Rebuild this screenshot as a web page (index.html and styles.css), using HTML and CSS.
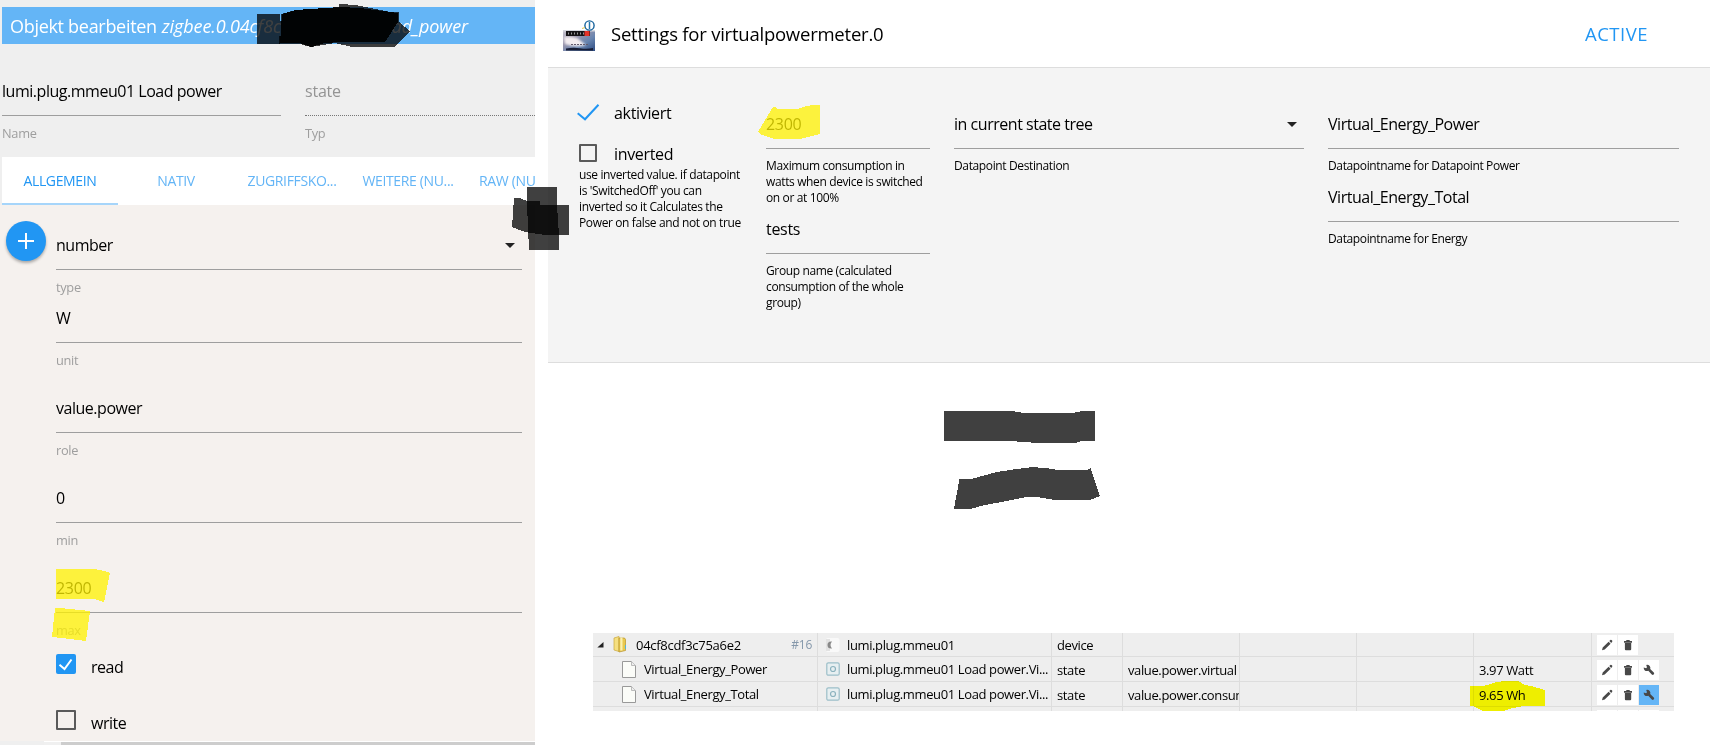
FILE: index.html
```html
<!DOCTYPE html>
<html lang="de">
<head>
<meta charset="utf-8">
<title>virtualpowermeter</title>
<link rel="stylesheet" href="styles.css">
</head>
<body>
<svg class="defs" width="0" height="0">
  <defs>
    <symbol id="pencil" viewBox="0 0 20 20"><path d="M5 15.200l.7-2.600 5.900-5.900 2 2-5.900 5.900zM12.300 6l1.100-1.100q.6-.4 1.100.1l.6.600q.5.5.1 1.100l-1 1.200z" fill="#484848"/></symbol>
    <symbol id="trash" viewBox="0 0 20 20"><path d="M6 6h2.300V5h3.400v1H14v1.700H6zM6.900 8h6.300v6.200q0 1-1 1H7.900q-1 0-1-1z" fill="#484848"/></symbol>
    <symbol id="wrench" viewBox="0 0 20 20"><path d="M4.700 7.600l2.400.6.900-1-.8-2.300q2.200-.4 3.500 1 1.100 1.300.5 3l3.600 3.700q.9 1-.1 1.900-1 .8-1.900 0L9.300 10.800q-2.300.7-3.700-.6-1-1-.9-2.600z" fill="#484848"/></symbol>
    <symbol id="page" viewBox="0 0 14 17"><path d="M.5.5h9l4 4v12H.5z" fill="#fbfcf8" stroke="#999"/><path d="M9.500.5v4h4" fill="#eee" stroke="#bbb"/></symbol>
    <symbol id="socket" viewBox="0 0 14 14"><rect x=".8" y=".8" width="12.400" height="12.400" rx="1.500" fill="#e7eff1" stroke="#9cbfc9" stroke-width="1.200"/><circle cx="7" cy="7" r="2.500" fill="none" stroke="#8bb2be" stroke-width="1.200"/></symbol>
  </defs>
</svg>
<div class="page">
  <section class="editor">
    <header class="editor-head"><span class="t1">Objekt bearbeiten</span> <em class="t2">zigbee.0.04cf8c</em><em class="t3">ad_power</em></header>
    <div class="meta">
      <div class="field"><div class="value v-name">lumi.plug.mmeu01 Load power</div><div class="label">Name</div></div>
      <div class="field disabled"><div class="value">state</div><div class="label">Typ</div></div>
    </div>
    <nav class="tabs">
      <a class="tab active">ALLGEMEIN</a><a class="tab">NATIV</a><a class="tab">ZUGRIFFSKO...</a><a class="tab">WEITERE (NU...</a><a class="tab last">RAW (NU</a>
    </nav>
    <div class="editor-body">
      <button class="fab"><svg width="40" height="40"><path d="M12 20h16M20 12v16" stroke="#fff" stroke-width="2"/></svg></button>
      <div class="form">
        <div class="field"><div class="value select">number<i class="caret"></i></div><div class="label">type</div></div>
        <div class="field tight"><div class="value">W</div><div class="label">unit</div></div>
        <div class="field"><div class="value">value.power</div><div class="label">role</div></div>
        <div class="field"><div class="value">0</div><div class="label">min</div></div>
        <div class="field"><div class="value num">2300</div><div class="label">max</div></div>
        <div class="check-row"><svg class="box" width="20" height="20"><rect width="20" height="20" rx="2" fill="#2196f3"/><path d="M3.500 10.800l5 4.200 7-9.500" fill="none" stroke="#fff" stroke-width="2"/></svg><span>read</span></div>
        <div class="check-row"><i class="box empty"></i><span>write</span></div>
      </div>
    </div>
    <div class="scrollbar"><i></i></div>
  </section>

  <section class="adapter">
    <header class="adapter-head">
      <svg class="logo" width="32" height="32" viewBox="0 0 32 32">
        <defs><linearGradient id="sky" x1="0" y1="0" x2="1" y2="1"><stop offset="0" stop-color="#c9c8d3"/><stop offset=".35" stop-color="#9b96ac"/><stop offset=".65" stop-color="#6885b0"/><stop offset="1" stop-color="#2c4a80"/></linearGradient><filter id="soft"><feGaussianBlur stdDeviation="1.200"/></filter></defs>
        <rect y="10" width="32" height="21" fill="url(#sky)"/>
        <path d="M0 10h32v1.500H0z" fill="#d5d7de"/>
        <path d="M1 17q6-1 13 1l9 7q-10 3-21-1z" fill="#f3edf0" filter="url(#soft)"/>
        <rect x="3" y="11" width="24" height="5" fill="#141316"/>
        <path d="M5 13.500h16" stroke="#999" stroke-width="2" stroke-dasharray="1 2"/>
        <rect x="21.500" y="11" width="5" height="5" fill="#e43228"/>
        <path d="M8 24.500h17" stroke="#635b6d" stroke-dasharray="2 1"/>
        <path d="M3 28.500q7-1.500 14-.3t13-.2v2.500H3z" fill="#171d35"/>
        <circle cx="26.500" cy="5.500" r="4.600" fill="#fff" stroke="#16629b" stroke-width="1.400"/><path d="M26.500 2v7" stroke="#2477ae" stroke-width="1.500"/>
        <path d="M19 8.500l3-1" stroke="#e8c54c"/>
      </svg>
      <h1>Settings for virtualpowermeter.0</h1>
      <a class="active-link">ACTIVE</a>
    </header>
    <div class="settings">
      <div class="col-flags">
        <div class="flag first"><svg width="24" height="18"><path d="M.7 9.300l7.300 6L21.500.7" fill="none" stroke="#2196f3" stroke-width="2"/></svg><span>aktiviert</span></div>
        <div class="flag"><i class="box empty small"></i><span>inverted</span></div>
        <p class="hint">use inverted value. if datapoint<br>is 'SwitchedOff' you can<br>inverted so it Calculates the<br>Power on false and not on true</p>
      </div>
      <div class="col">
        <div class="value num">2300</div><p class="hint">Maximum consumption in<br>watts when device is switched<br>on or at 100%</p>
        <div class="value num">tests</div><p class="hint">Group name (calculated<br>consumption of the whole<br>group)</p>
      </div>
      <div class="col">
        <div class="value select">in current state tree<i class="caret"></i></div><p class="hint">Datapoint Destination</p>
      </div>
      <div class="col">
        <div class="value">Virtual_Energy_Power</div><p class="hint">Datapointname for Datapoint Power</p>
        <div class="value">Virtual_Energy_Total</div><p class="hint">Datapointname for Energy</p>
      </div>
    </div>

    <div class="tree">
      <div class="row">
        <div class="cell name root"><svg class="arrow" width="7" height="6"><path d="M6.500 0v5.500H.3z" fill="#222"/></svg><svg class="folder" width="14" height="17"><path d="M1 2l5-1.500v15L1 14z" fill="#f5df7f" stroke="#c9a63a" stroke-width=".7"/><path d="M6 2h5.500l1 1.500v11L6 16z" fill="#e9c94f" stroke="#b8922a" stroke-width=".7"/><path d="M7.300 1.500h2.200v13H7.300z" fill="#fbf0b2"/><path d="M12.500 9v4" stroke="#58b3d5"/></svg><span class="txt">04cf8cdf3c75a6e2</span><span class="count">#16</span></div>
        <div class="cell title"><svg width="14" height="14"><rect width="13.500" height="14" rx="2" fill="#f9f9f9"/><path d="M0 1h4v12H0z" fill="#e2e2e2"/><path d="M6 3.500q-4.500-.5-4.500 3.500T6 10.500q-3-3.500 0-7z" fill="#888"/></svg><span class="txt">lumi.plug.mmeu01</span></div>
        <div class="cell">device</div><div class="cell"></div><div class="cell"></div><div class="cell"></div><div class="cell"></div>
        <div class="cell actions"><b><svg><use href="#pencil"/></svg></b><b><svg><use href="#trash"/></svg></b></div>
      </div>
      <div class="row">
        <div class="cell name"><svg width="14" height="17"><use href="#page"/></svg><span class="txt">Virtual_Energy_Power</span></div>
        <div class="cell title"><svg width="14" height="14"><use href="#socket"/></svg><span class="txt">lumi.plug.mmeu01 Load power.Vi...</span></div>
        <div class="cell">state</div><div class="cell">value.power.virtual</div><div class="cell"></div><div class="cell"></div><div class="cell">3.97 Watt</div>
        <div class="cell actions"><b><svg><use href="#pencil"/></svg></b><b><svg><use href="#trash"/></svg></b><b><svg><use href="#wrench"/></svg></b></div>
      </div>
      <div class="row">
        <div class="cell name"><svg width="14" height="17"><use href="#page"/></svg><span class="txt">Virtual_Energy_Total</span></div>
        <div class="cell title"><svg width="14" height="14"><use href="#socket"/></svg><span class="txt">lumi.plug.mmeu01 Load power.Vi...</span></div>
        <div class="cell">state</div><div class="cell">value.power.consum</div><div class="cell"></div><div class="cell"></div><div class="cell">9.65 Wh</div>
        <div class="cell actions"><b><svg><use href="#pencil"/></svg></b><b><svg><use href="#trash"/></svg></b><b class="on"><svg><use href="#wrench"/></svg></b></div>
      </div>
      <div class="row">
        <div class="cell"></div><div class="cell"></div><div class="cell"></div><div class="cell"></div><div class="cell"></div><div class="cell"></div><div class="cell"></div>
        <div class="cell actions"><b></b><b></b><b></b></div>
      </div>
    </div>
  </section>
</div>

<svg class="marks" width="1710" height="745" shape-rendering="crispEdges">
  <g fill="#fff200" fill-opacity=".75">
    <path d="M56 569H94L105 571 110 573 104 602 100 601 94 599H56z"/>
    <path d="M55 608L60 608 90 611 86 641 70 639 52 637z"/>
    <path d="M758 132L773 107 775 107 777 109H797L807 106 812 105H820V134L802 138.500H773L762 135z"/>
  </g>
  <path class="marker" fill="#ff0" d="M1470 686H1482L1487 685 1497 682 1505 681H1518L1525 685 1533 686.500 1545 690V706H1523L1513 708 1503 711H1483L1473 706H1470z"/>
  <g fill="#000" fill-opacity=".75">
    <path d="M257 14H280V44H257z"/>
    <path d="M390 12L399 12V22L410 31 395 47H352L335 43 311 47 300 44 279 44 281 14 296 10 325 8 339 8V4L356 5z"/>
    <path d="M527 187H557V205L559 235V250H529L527 205z"/>
    <path d="M514 198L520 198 527 201H540V205H569V235H545L525 232 512 227z"/>
    <path d="M944 411H1010L1019 412 1022 413H1045L1073 413 1082 411H1095V441H1082L1075 443H1038L1010 441H944z"/>
    <path d="M959.500 479L973 478.500 997 472 1013 469.500 1033 467 1049 468.500 1058 470H1087L1090.500 468 1100 496 1091 499.500H1052L1037 497H1027L1007 501 985 505 972 508.500H954z"/>
  </g>
  <path fill="#000" fill-opacity=".93" d="M280 43L282 14 296 10 325 8 340 7 360 8 383 11 398 13V22L385 42H340L325 43 311 47 300 43z"/>
</svg>
</body>
</html>
```
FILE: styles.css
```css
* { box-sizing: border-box; }
body { margin: 0; background: #fff; font-family: "Open Sans", "Noto Sans", sans-serif; color: #000; }
.defs, .marks { position: absolute; left: 0; top: 0; pointer-events: none; }
.marker { mix-blend-mode: multiply; }
.page { display: flex; gap: 13px; width: 1710px; height: 745px; overflow: hidden; }

.editor { width: 535px; height: 745px; background: #efefef; padding: 7px 0 0; display: flex; flex-direction: column; overflow: hidden; }
.editor-head { margin-left: 2px; height: 37px; line-height: 39px; padding-left: 8px; background: #64b5f6; color: #fff; font-size: 18px; white-space: pre; flex: none; }
.t1 { display: inline-block; width: 147px; letter-spacing: -.3px; }
.t2 { display: inline-block; width: 230px; letter-spacing: -.1px; }
.t3 { letter-spacing: -.1px; }
.meta { display: grid; grid-template-columns: 279px 230px; gap: 24px; padding: 23px 0 0 2px; height: 113px; flex: none; }
.field .value, .col .value { height: 49px; line-height: 49px; font-size: 16px; letter-spacing: -.47px; border-bottom: 1px solid #9e9e9e; white-space: nowrap; }
.field .value.num, .col .value.num { letter-spacing: -.3px; }
.label { height: 24px; padding-top: 10px; line-height: 14px; font-size: 12.800px; letter-spacing: -.3px; color: #9e9e9e; }
.field.disabled .value { color: #949494; letter-spacing: -.2px; border-bottom: 1px dotted #777; }
.tabs { margin-left: 2px; height: 48px; background: #fff; display: flex; flex: none; }
.tab { flex: none; width: 116px; text-align: center; line-height: 48px; font-size: 14px; letter-spacing: -.35px; color: #64b5f6; white-space: nowrap; height: 48px; }
.tab.active { color: #2196f3; border-bottom: 2px solid #a6d5fa; }
.tab.last { width: 69px; text-align: left; padding-left: 13px; }
.editor-body { background: #f5f1ee; height: 536px; display: flex; padding: 16px 13px 0 6px; gap: 10px; flex: none; }
.fab { width: 40px; height: 40px; border: 0; padding: 0; border-radius: 50%; background: #2196f3; box-shadow: 0 2px 3px rgba(0,0,0,.3); flex: none; }
.form { flex: 1; }
.form .field + .field { margin-top: 17px; }
.form .field.tight { margin-top: 0 !important; }
.select { display: flex; justify-content: space-between; align-items: center; }
.caret { border: 5px solid transparent; border-top-color: #222; border-bottom: 0; margin-right: 7px; }
.check-row { display: flex; gap: 15px; margin-top: 17px; height: 20px; margin-bottom: 36px; }
.check-row + .check-row { margin-top: 0; }
.check-row span { font-size: 16px; line-height: 26px; letter-spacing: -.5px; }
.box { width: 20px; height: 20px; flex: none; }
.box.empty { border: 2px solid #5a5a5a; border-radius: 1px; }
.box.small { width: 18px; height: 18px; margin: 0 4px 0 2px; }
.scrollbar { height: 4px; margin-left: 44px; border-top: 1px solid #fff; background: #f0f0f0; flex: none; }
.scrollbar i { display: block; height: 3px; margin-left: 17px; background: #cdcdcd; }

.adapter { width: 1162px; }
.adapter-head { height: 68px; border-bottom: 1px solid #ddd; display: flex; align-items: flex-start; padding: 20px 62px 0 15px; }
.adapter-head h1 { margin: -5px 0 0 16px; flex: 1; font-size: 18.500px; font-weight: 400; line-height: 38px; letter-spacing: -.23px; }
.active-link { color: #2196f3; font-size: 18.500px; line-height: 38px; margin-top: -5px; letter-spacing: .5px; }
.settings { background: #f4f4f4; height: 295px; border-bottom: 1px solid #ddd; padding: 32px 0 0 29px; display: grid; grid-template-columns: 165px 164px 350px 351px; column-gap: 24px; }
.flag { display: flex; gap: 13px; height: 18px; margin-top: 22px; }
.flag.first { margin-top: 4px; }
.flag span { font-size: 16px; line-height: 20px; letter-spacing: -.33px; }
.flag.first span { line-height: 18px; }
.flag + .hint { padding: 5px 0 0 2px; }
.hint { margin: 0; padding-top: 9px; font-size: 12px; line-height: 16px; letter-spacing: -.37px; white-space: nowrap; }
.col .value + .hint { margin-bottom: -1px; }

.tree { margin: 270px 0 0 45px; width: 1081px; height: 78px; overflow: hidden; background: #eee; }
.row { display: grid; grid-template-columns: 225px 234px 71px 117px 117px 117px 118px 82px; height: 25px; border-bottom: 1px solid #ddd; }
.row:first-child { height: 24px; }
.cell { border-right: 1px solid #ddd; padding-left: 5px; font-size: 13px; line-height: 26px; letter-spacing: -.38px; white-space: nowrap; overflow: hidden; }
.row:first-child .cell { line-height: 24px; }
.cell:last-child { border: 0; }
.cell svg { flex: none; }
.name { display: flex; align-items: center; gap: 8px; padding-left: 29px; }
.name.root { padding: 0 5px 0 4px; gap: 9px; letter-spacing: -.28px; }
.count { margin-left: auto; font-size: 12px; color: #8497aa; }
.title { display: flex; align-items: center; gap: 7px; padding-left: 8px; }
.actions { display: flex; gap: 1px; padding: 3px 0 0 5px; }
.row:first-child .actions { padding-top: 2px; }
.actions b { width: 20px; height: 20px; background: #fff; }
.actions b.on { background: #64b5f6; }
.actions svg { display: block; width: 20px; height: 20px; }
```
